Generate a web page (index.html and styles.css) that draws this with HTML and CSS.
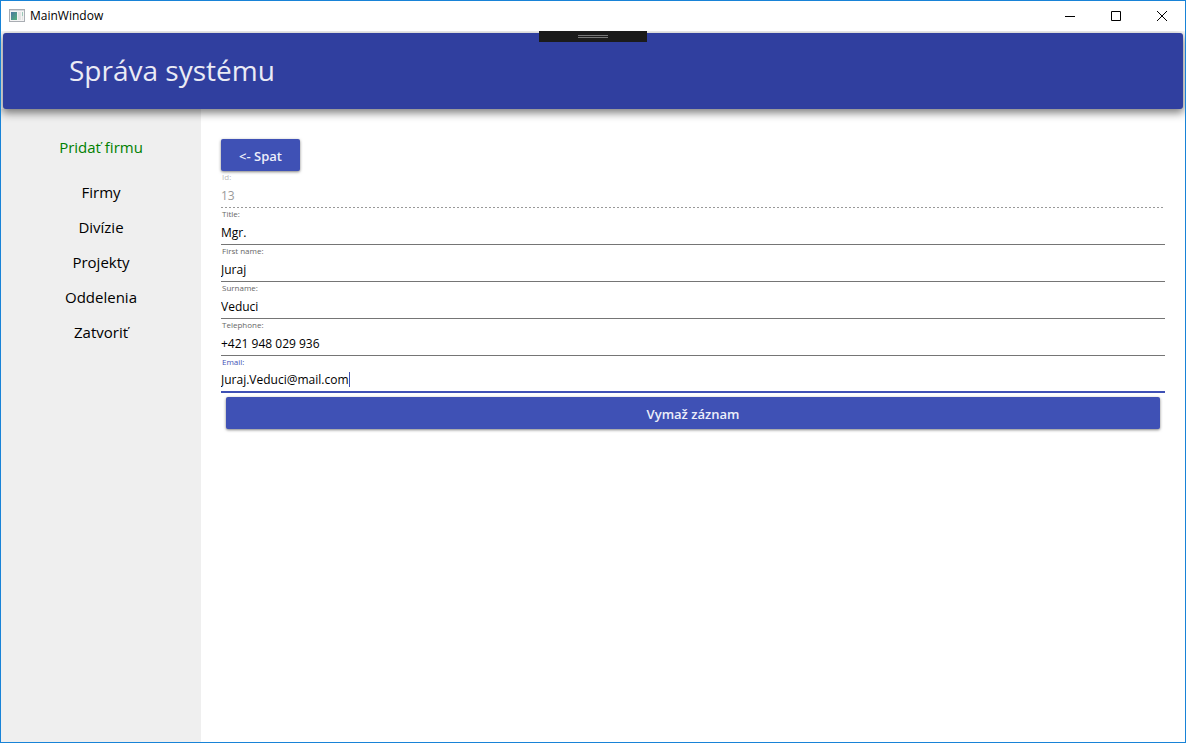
FILE: index.html
```html
<!DOCTYPE html>
<html lang="sk">
<head>
<meta charset="utf-8">
<title>MainWindow</title>
<link rel="stylesheet" href="styles.css">
</head>
<body>
<div class="window">
  <div class="titlebar">
    <svg class="app-icon" width="16" height="14" viewBox="0 0 16 14" aria-hidden="true">
      <defs>
        <linearGradient id="pane" x1="0" y1="0" x2="1" y2="1">
          <stop offset="0" stop-color="#4a76a0"/>
          <stop offset="1" stop-color="#54b27c"/>
        </linearGradient>
      </defs>
      <rect x="0.5" y="0.5" width="15" height="12" fill="#f4f4f4" stroke="#a9adb3"/>
      <rect x="1" y="1" width="14" height="1" fill="#d5d8dc"/>
      <rect x="2" y="3" width="6" height="8" fill="url(#pane)"/>
      <rect x="9" y="3" width="3" height="8" fill="#e3e3e3"/>
      <rect x="13" y="3" width="1" height="4" fill="#9cc8b8"/>
      <rect x="13" y="7" width="1" height="4" fill="#e3e3e3"/>
    </svg>
    <span class="window-title">MainWindow</span>
    <div class="window-controls">
      <button type="button" aria-label="Minimize"><svg width="10" height="10" viewBox="0 0 10 10"><path d="M0 5.5H10"/></svg></button>
      <button type="button" aria-label="Maximize"><svg width="10" height="10" viewBox="0 0 10 10"><path d="M.5 .5H9.500V9.500H.5Z"/></svg></button>
      <button type="button" aria-label="Close"><svg width="10" height="10" viewBox="0 0 10 10"><path d="M0 0L10 10M10 0L0 10"/></svg></button>
    </div>
  </div>
  <header class="header">
    <h1>Správa systému</h1>
    <div class="debug-handle"></div>
  </header>
  <div class="body">
    <nav class="sidebar">
      <a class="add" href="#">Pridať firmu</a>
      <a href="#">Firmy</a>
      <a href="#">Divízie</a>
      <a href="#">Projekty</a>
      <a href="#">Oddelenia</a>
      <a href="#">Zatvoriť</a>
    </nav>
    <main class="content">
      <button class="button back" type="button">&lt;- Spat</button>
      <form class="form">
        <div class="field disabled"><label for="id">Id:</label><input id="id" value="13" disabled></div>
        <div class="field"><label for="title">Title:</label><input id="title" value="Mgr."></div>
        <div class="field"><label for="first">First name:</label><input id="first" value="Juraj"></div>
        <div class="field"><label for="surname">Surname:</label><input id="surname" value="Veduci"></div>
        <div class="field"><label for="phone">Telephone:</label><input id="phone" type="tel" value="+421 948 029 936"></div>
        <div class="field active"><label for="email">Email:</label><div class="entry"><input id="email" value="Juraj.Veduci@mail.com"><span class="caret"></span></div></div>
        <button class="button delete" type="button">Vymaž záznam</button>
      </form>
    </main>
  </div>
</div>
</body>
</html>
```
FILE: styles.css
```css
* {
  box-sizing: border-box;
}

body {
  margin: 0;
  font-family: "Noto Sans", "Open Sans", sans-serif;
  font-size: 12px;
  color: #000;
  background: #fff;
}

.window {
  display: flex;
  flex-direction: column;
  min-height: 100vh;
  border: 1px solid #1883d7;
}

.titlebar {
  display: flex;
  align-items: center;
  height: 30px;
  padding-left: 8px;
}

.window-title {
  margin-left: 5px;
  padding-bottom: 2px;
  font-family: "Open Sans", sans-serif;
}

.window-controls {
  display: flex;
  margin-left: auto;
}

.window-controls button {
  display: flex;
  align-items: center;
  justify-content: center;
  width: 46px;
  height: 28px;
  padding: 0;
  border: 0;
  background: none;
}

.window-controls path {
  fill: none;
  stroke: #000;
}

.header {
  position: relative;
  z-index: 1;
  display: flex;
  align-items: center;
  height: 76px;
  margin: 2px 2px 0;
  padding: 0 0 2px 66px;
  border-radius: 3px;
  background: #303f9f;
  box-shadow: 0 3px 8px 1px rgba(0, 0, 0, 0.5);
  clip-path: inset(-2px -2px -24px -2px);
}

.header h1 {
  margin: 0;
  font-family: "Open Sans", sans-serif;
  font-size: 28px;
  font-weight: 400;
  color: #eaebf5;
}

.debug-handle {
  position: absolute;
  top: -2px;
  left: 50%;
  width: 108px;
  height: 11px;
  margin-left: -54px;
  background:
    linear-gradient(#777 1px, transparent 1px 2px, #777 2px) center / 30px 3px no-repeat,
    #1b1b1b;
}

.body {
  display: flex;
  flex: 1;
}

.sidebar {
  display: flex;
  flex-direction: column;
  width: 200px;
  padding-top: 21px;
  background: #efefef;
  text-align: center;
  font-family: "Open Sans", sans-serif;
  font-size: 15px;
  line-height: 35px;
}

.sidebar a {
  color: #000;
  text-decoration: none;
}

.sidebar .add {
  margin-bottom: 10px;
  color: #008000;
}

.content {
  flex: 1;
  padding: 30px 20px 20px;
}

.button {
  display: block;
  height: 32px;
  padding: 2px 18px 0;
  border: 0;
  border-radius: 2px;
  background: #3f51b5;
  box-shadow: 0 1px 3px rgba(0, 0, 0, 0.5);
  color: #eceefa;
  font-family: "Open Sans", sans-serif;
  font-size: 13px;
  font-weight: 600;
}

.form {
  display: flex;
  flex-direction: column;
}

.field {
  display: flex;
  flex-direction: column;
  height: 37px;
  border-bottom: 1px solid #757575;
}

.field label {
  padding-left: 1px;
  font-family: "Open Sans", sans-serif;
  font-size: 8px;
  line-height: 12px;
  color: #666;
}

.field input {
  flex: 1;
  min-width: 0;
  padding: 0;
  border: 0;
  outline: 0;
  background: none;
  font-family: "Open Sans", sans-serif;
  font-size: 12px;
  color: #000;
}

.field.disabled {
  border-bottom: 0;
  padding-bottom: 1px;
  background: repeating-linear-gradient(90deg, #999 0 2px, transparent 2px 4px) bottom / 100% 1px no-repeat;
}

.field.disabled label {
  color: #bbb;
}

.field.disabled input {
  color: #9a9a9a;
}

.field.active {
  border-bottom: 2px solid #3f51b5;
}

.field.active label {
  color: #3f51b5;
}

.entry {
  display: flex;
  align-items: center;
  flex: 1;
}

.entry input {
  flex: none;
  field-sizing: content;
}

.caret {
  width: 1px;
  height: 15px;
  background: #3f51b5;
}

.delete {
  margin: 4px 5px 0;
}
```
